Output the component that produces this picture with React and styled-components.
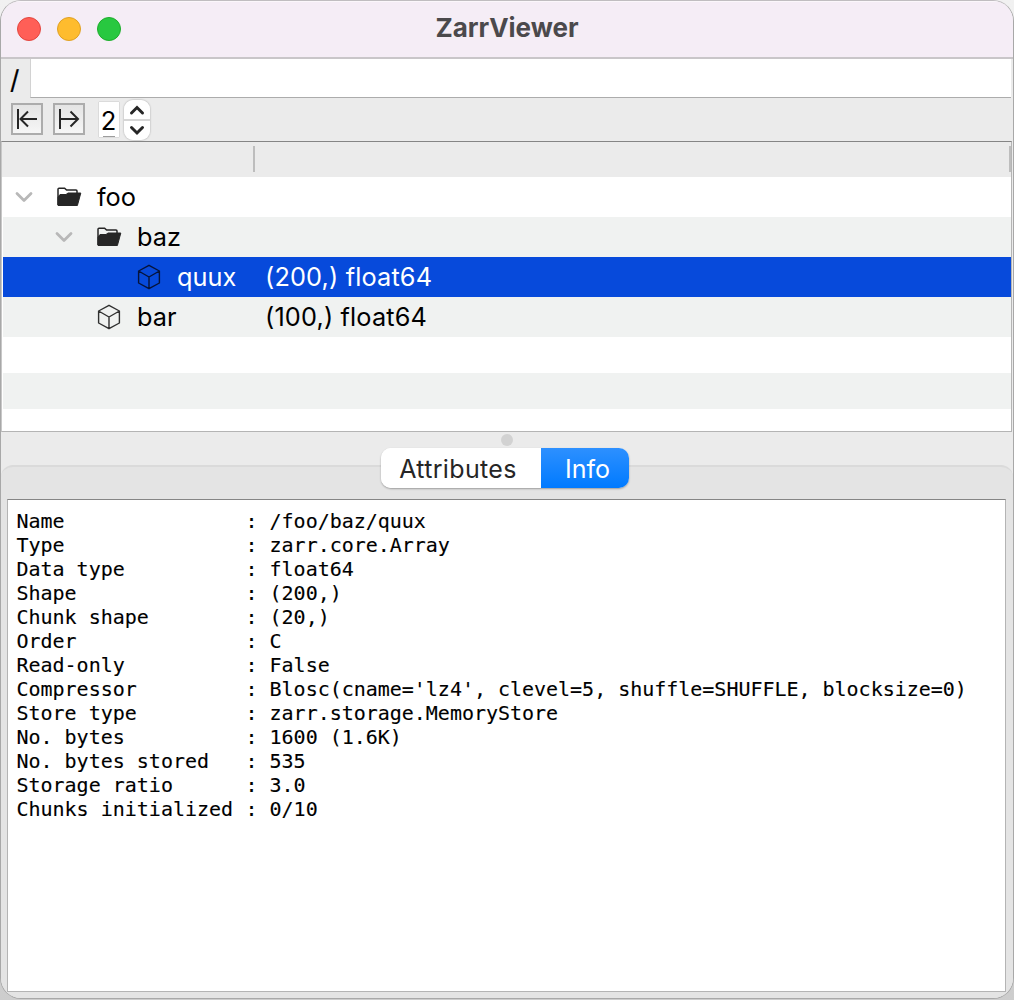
import React from "react";
import styled, { createGlobalStyle } from "styled-components";

const Global = createGlobalStyle`
  * { box-sizing: border-box; }
  html, body { margin: 0; background: #d4d4d4; }
  body { font-family: Inter, "Liberation Sans", sans-serif; overflow: hidden; }
`;

const Desktop = styled.div`
  width: 1014px;
  height: 1000px;
  background: linear-gradient(#f1f1f1, #cdcdcd);
`;

const Window = styled.div`
  height: 999px;
  display: flex;
  flex-direction: column;
  overflow: hidden;
  border: 1px solid #a8a8a8;
  border-top-color: #c0bdc0;
  border-radius: 21px;
  background: #ebebeb;
`;

const TitleBar = styled.header`
  height: 58px;
  flex: none;
  display: grid;
  grid-template-columns: 1fr auto 1fr;
  align-items: center;
  padding: 0 16px 2px;
  background: #f5edf6;
  border-top: 1px solid #fbf7fb;
  border-bottom: 2px solid #c9c6c9;
`;

const Lights = styled.div`
  display: flex;
  gap: 16px;
`;

const Light = styled.span`
  width: 24px;
  height: 24px;
  border-radius: 50%;
  background: ${(p) => p.$fill};
  border: 1px solid ${(p) => p.$edge};
`;

const Title = styled.h1`
  margin: 0 0 2px;
  font-size: 26px;
  line-height: 32px;
  font-weight: 700;
  color: #4b494c;
`;

const PathRow = styled.div`
  height: 40px;
  flex: none;
  display: flex;
  padding-right: 2px;
`;

const Slash = styled.span`
  width: 29px;
  padding-left: 9px;
  font-size: 26px;
  line-height: 42px;
  -webkit-text-stroke: 0.2px #000;
  color: #000;
`;

const PathInput = styled.div`
  flex: 1;
  height: 39px;
  background: #fff;
  border-left: 1px solid #d2d2d2;
  border-bottom: 1px solid #acacac;
`;

const Toolbar = styled.div`
  height: 42px;
  flex: none;
  display: flex;
  align-items: center;
  padding: 0 10px 1px;
`;

const ToolButton = styled.button`
  width: 32px;
  height: 32px;
  margin: 0 10px 1px 0;
  padding: 0;
  border: 2px solid #acacac;
  background: linear-gradient(#e4e4e4, #f6f6f6);
`;

const Depth = styled.span`
  width: 20px;
  height: 35px;
  margin: 0 5px 0 4px;
  padding-right: 1px;
  background: linear-gradient(#9c9c9c, #9c9c9c) 50% 100% / 12px 1px no-repeat, #fff;
  box-shadow: 0 0 1px rgba(0, 0, 0, 0.4);
  font-size: 25.5px;
  line-height: 37px;
  text-align: center;
  color: #000;
`;

const Stepper = styled.div`
  width: 26px;
  height: 40px;
  border-radius: 9px;
  background: linear-gradient(#fff 48%, #d6d6d6 48%, #d6d6d6 52%, #fff 52%);
  box-shadow: 0 0 2px rgba(0, 0, 0, 0.35);
`;

const Glyph = styled.svg`
  display: block;
  flex: none;
  fill: none;
  stroke: ${(p) => p.$color || "#262626"};
  stroke-width: ${(p) => p.$weight || 2};
  overflow: visible;
`;

const Tree = styled.section`
  width: 1011px;
  height: 291px;
  flex: none;
  border: 1px solid #b4b4b4;
  border-top-color: #858585;
  border-left-color: #c8c8c8;
  background: #fff;
  overflow: hidden;
`;

const TreeHeader = styled.div`
  height: 35px;
  display: flex;
  align-items: center;
  justify-content: space-between;
  padding: 0 0 2px 251px;
  background: #ebebeb;
`;

const Divider = styled.span`
  width: 2px;
  height: 26px;
  background: #bdbdbd;
`;

const TreeRow = styled.div`
  height: ${(p) => (p.$blank ? 36 : 40)}px;
  margin-left: 1px;
  display: grid;
  grid-template-columns: 262px 1fr;
  align-items: center;
  background: ${(p) => (p.$selected ? "#074adb" : p.$alt ? "#f0f2f1" : "#fff")};
  color: ${(p) => (p.$selected ? "#fff" : "#000")};
  font-size: 25.3px;
  line-height: 38px;
  white-space: nowrap;
`;

const NameCell = styled.div`
  display: flex;
  align-items: center;
  padding-left: ${(p) => 12 + p.$depth * 40}px;
`;

const Toggle = styled.span`
  width: ${(p) => (p.$open ? 41 : 42)}px;
`;

const IconSlot = styled.span`
  width: ${(p) => (p.$wide ? 41 : 40)}px;
`;

const Label = styled.span`
  letter-spacing: ${(p) => p.$track || 0}px;
`;

const Splitter = styled.div`
  height: 33px;
  flex: none;
  display: flex;
  justify-content: center;
  padding-top: 2px;
`;

const Grip = styled.span`
  width: 12px;
  height: 12px;
  border-radius: 50%;
  background: #d2d2d2;
`;

const Panel = styled.section`
  flex: 1;
  display: flex;
  flex-direction: column;
  align-items: center;
  padding: 0 7px 6px 6px;
  border-top: 2px solid #dadada;
  border-radius: 12px 12px 0 0;
  background: #e4e4e4;
`;

const Tabs = styled.div`
  width: 248px;
  height: 40px;
  flex: none;
  display: flex;
  margin: -19px 3px 11px 0;
  border-radius: 10px;
  overflow: hidden;
  background: #fff;
  box-shadow: 0 1px 2px rgba(0, 0, 0, 0.32);
`;

const Tab = styled.button`
  width: ${(p) => p.$width}px;
  padding: 2px ${(p) => (p.$active ? 0 : 6)}px 0 ${(p) => (p.$active ? 5 : 0)}px;
  border: 0;
  background: ${(p) => (p.$active ? "linear-gradient(#2d90ff, #007aff)" : "#fff")};
  color: ${(p) => (p.$active ? "#fff" : "#262626")};
  font: 25px/38px Inter, "Liberation Sans", sans-serif;
  letter-spacing: ${(p) => (p.$active ? 0 : 0.35)}px;
`;

const Details = styled.dl`
  width: 100%;
  flex: 1;
  margin: 0;
  padding: 9px 0 0 8.4px;
  background: #fff;
  border: 1px solid #b4b4b4;
  border-top-color: #858585;
  font: 20px/24px "DejaVu Sans Mono", monospace;
  -webkit-text-stroke: 0.12px #000;
  color: #000;
`;

const Detail = styled.div`
  display: grid;
  grid-template-columns: 229.2px 24px 1fr;
  height: 24px;
  white-space: pre;
`;

const Key = styled.dt`
  margin: 0;
`;

const Value = styled.dd`
  margin: 0;
  letter-spacing: -0.02px;
`;

const Chevron = () => (
  <Glyph width="18" height="12" viewBox="0 0 18 12" $color="#b8b8b8" $weight={2.8}>
    <path d="M2 2.5 9 9.5 16 2.5" strokeLinecap="round" strokeLinejoin="round" />
  </Glyph>
);

const Folder = () => (
  <Glyph width="26" height="20" viewBox="0 0 26 20" $weight={1.5}>
    <path d="M2 18V2.2Q2 1.2 3 1.2H8.6L10.6 3.1H20Q21 3.1 21 4.1V7" />
    <path d="M2 18.5V10L4 7.5H10L12 6H24.8L21.4 18.5Z" fill="#262626" strokeWidth="1" strokeLinejoin="round" />
  </Glyph>
);

const Cube = ({ selected }) => (
  <Glyph width="24" height="26" viewBox="0 0 24 26" $color={selected ? "#06133a" : "#303030"} $weight={1.4}>
    <path d="M12 1.3 22.4 7V19L12 24.7 1.6 19V7ZM1.6 7 12 13 22.4 7M12 13V24.7" strokeLinejoin="round" />
  </Glyph>
);

const nodes = [
  { name: "foo", depth: 0, folder: true },
  { name: "baz", depth: 1, folder: true },
  { name: "quux", depth: 2, info: "(200,) float64", selected: true },
  { name: "bar", depth: 1, info: "(100,) float64" },
];

const details = [
  ["Name", "/foo/baz/quux"],
  ["Type", "zarr.core.Array"],
  ["Data type", "float64"],
  ["Shape", "(200,)"],
  ["Chunk shape", "(20,)"],
  ["Order", "C"],
  ["Read-only", "False"],
  ["Compressor", "Blosc(cname='lz4', clevel=5, shuffle=SHUFFLE, blocksize=0)"],
  ["Store type", "zarr.storage.MemoryStore"],
  ["No. bytes", "1600 (1.6K)"],
  ["No. bytes stored", "535"],
  ["Storage ratio", "3.0"],
  ["Chunks initialized", "0/10"],
];

export default function App() {
  return (
    <Desktop>
      <Global />
      <Window>
        <TitleBar>
          <Lights>
            <Light $fill="#ff5f57" $edge="#e2463f" />
            <Light $fill="#febc2e" $edge="#dfa023" />
            <Light $fill="#28c840" $edge="#1dad2b" />
          </Lights>
          <Title>ZarrViewer</Title>
        </TitleBar>
        <PathRow>
          <Slash>/</Slash>
          <PathInput />
        </PathRow>
        <Toolbar>
          <ToolButton aria-label="Collapse">
            <Glyph width="28" height="28" viewBox="0 0 28 28">
              <path d="M5 4V24M24 14H7M15 6.5 7.5 14 15 21.5" />
            </Glyph>
          </ToolButton>
          <ToolButton aria-label="Expand">
            <Glyph width="28" height="28" viewBox="0 0 28 28">
              <path d="M5 4V24M5 14H23M15.5 6.5 23 14 15.5 21.5" />
            </Glyph>
          </ToolButton>
          <Depth>2</Depth>
          <Stepper>
            <Glyph width="26" height="40" viewBox="0 0 26 40" $weight={3}>
              <path d="M7.5 13 13 7.5 18.5 13M7.5 27.5 13 33 18.5 27.5" strokeLinecap="round" />
            </Glyph>
          </Stepper>
        </Toolbar>
        <Tree>
          <TreeHeader>
            <Divider />
            <Divider />
          </TreeHeader>
          {nodes.map((n, i) => (
            <TreeRow key={n.name} $alt={i % 2 === 1} $selected={n.selected}>
              <NameCell $depth={n.depth}>
                <Toggle $open={n.folder}>{n.folder && <Chevron />}</Toggle>
                <IconSlot $wide={n.folder}>{n.folder ? <Folder /> : <Cube selected={n.selected} />}</IconSlot>
                <Label>{n.name}</Label>
              </NameCell>
              <Label $track={0.16}>{n.info}</Label>
            </TreeRow>
          ))}
          <TreeRow $blank />
          <TreeRow $blank $alt />
        </Tree>
        <Splitter>
          <Grip />
        </Splitter>
        <Panel>
          <Tabs>
            <Tab $width={160}>Attributes</Tab>
            <Tab $width={88} $active>Info</Tab>
          </Tabs>
          <Details>
            {details.map(([key, value]) => (
              <Detail key={key}>
                <Key>{key}</Key>
                <span>:</span>
                <Value>{value}</Value>
              </Detail>
            ))}
          </Details>
        </Panel>
      </Window>
    </Desktop>
  );
}
